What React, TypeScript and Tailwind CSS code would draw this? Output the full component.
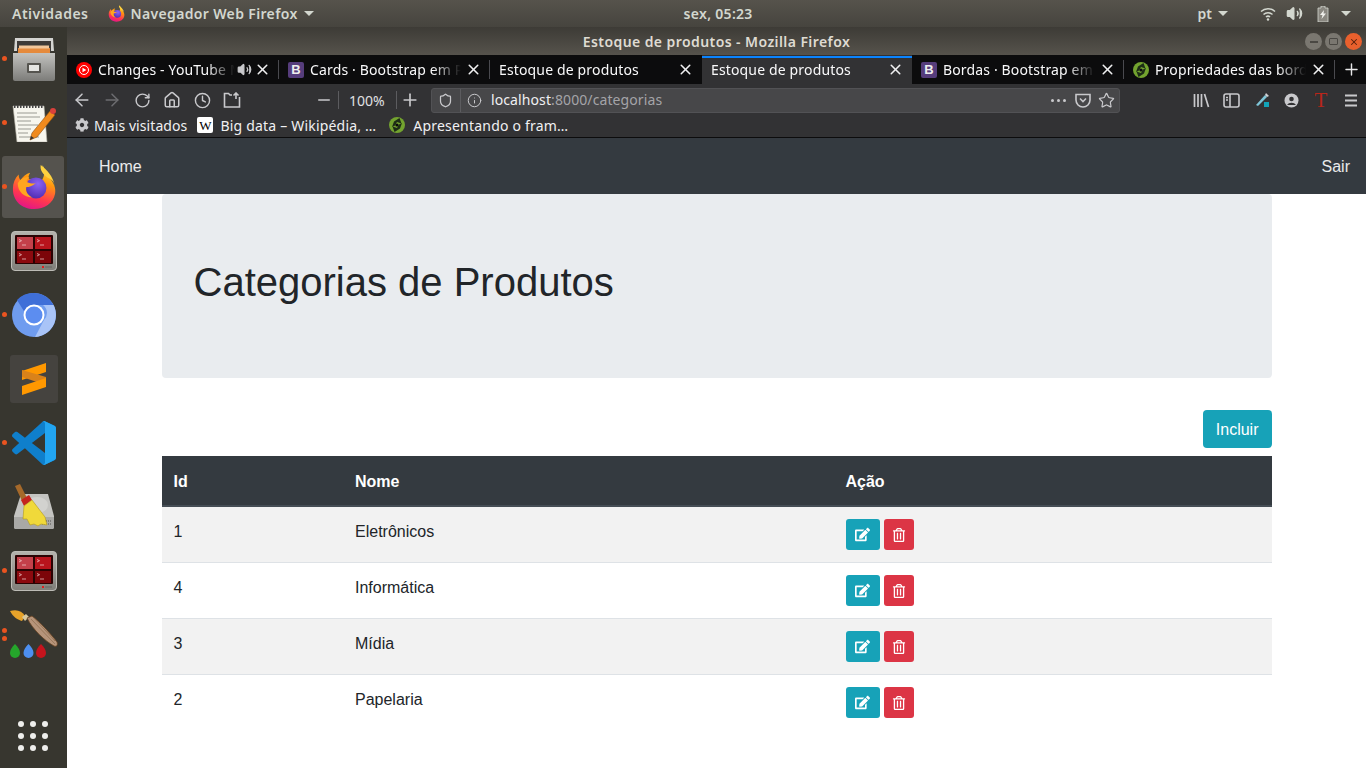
import { ArrowLeft, ArrowRight, Clock, House, Info, Minus, Plus, RotateCw, Shield, Star, Volume2, X } from "lucide-react"
import { FaCog, FaEdit, FaRegTrashAlt } from "react-icons/fa"

const ui = "font-['Noto_Sans','Open_Sans',sans-serif]"

function FirefoxLogo({ size, id }: { size: number; id: string }) {
  return (
    <svg width={size} height={size} viewBox="0 0 48 48">
      <defs>
        <linearGradient id={`${id}a`} x1="0.7" y1="0" x2="0.35" y2="1">
          <stop offset="0" stopColor="#ffe847" />
          <stop offset="0.35" stopColor="#ff980e" />
          <stop offset="0.72" stopColor="#ff3750" />
          <stop offset="1" stopColor="#e31587" />
        </linearGradient>
        <radialGradient id={`${id}b`} cx="0.6" cy="0.3" r="0.75">
          <stop offset="0" stopColor="#8a63f5" />
          <stop offset="1" stopColor="#4f2bb0" />
        </radialGradient>
      </defs>
      <path d="M33 1c0 6 4 9 7 13 5 6 7 11 6 17-2 10-11 16-22 16C11 47 2 38 2 26c0-6 2-11 6-15 0 3 1 5 2 6 2-4 6-7 10-8-2 3-2 5-1 7 4-1 9 0 12 3C35 14 36 7 33 1z" fill={`url(#${id}a)`} />
      <path d="M31 1c6 5 13 11 15 23 0-4-3-8-8-10-4-3-8-7-7-13z" fill="#ffd23f" />
      <circle cx="26" cy="25" r="11" fill={`url(#${id}b)`} />
      <path d="M7 20c3-5 7-7 12-6-3 2-3 4-2 5 3 1 6 2 9 1-4 3-7 4-10 4-1 4 1 9 7 11-9 0-16-6-16-15z" fill="#ffa51f" />
    </svg>
  )
}

function TerminalIcon({ id }: { id: string }) {
  return (
    <svg width="46" height="40" viewBox="0 0 46 40">
      <defs>
        <linearGradient id={id} x1="0" y1="0" x2="0" y2="1">
          <stop offset="0" stopColor="#b4b3ad" />
          <stop offset="1" stopColor="#7f7e78" />
        </linearGradient>
      </defs>
      <rect x="0.5" y="0.5" width="45" height="39" rx="3.500" fill={`url(#${id})`} stroke="#bdbcb6" />
      <rect x="4" y="4" width="38" height="29" rx="1" fill="#2a0303" />
      <rect x="6" y="6" width="16" height="12" fill="#c4404a" />
      <rect x="24" y="6" width="16" height="12" fill="#b8141c" />
      <rect x="6" y="20" width="16" height="12" fill="#8c0a0f" />
      <rect x="24" y="20" width="16" height="12" fill="#7c0509" />
      <path d="M8 8.500l2.500 1.200L8 11M11 14h4M26 8.500l2.500 1.200L26 11M29 14h4M8 22.500l2.500 1.200L8 25M11 28h4M26 22.500l2.500 1.200L26 25M29 28h4" stroke="#f4d5d5" strokeWidth="0.700" fill="none" />
      <rect x="31" y="35" width="2" height="2" fill="#e01b1b" />
      <rect x="34" y="35" width="7" height="2" fill="#74736e" />
    </svg>
  )
}

const dock = [
  <svg key="files" width="42" height="44" viewBox="0 0 42 44">
    <defs>
      <linearGradient id="cab" x1="0" y1="0" x2="0" y2="1">
        <stop offset="0" stopColor="#c2c2bf" />
        <stop offset="1" stopColor="#7c7c79" />
      </linearGradient>
    </defs>
    <path d="M2 1h38l1 13H1z" fill="#d4d4d1" />
    <rect x="4" y="4" width="34" height="11" fill="#3d3a37" />
    <rect x="5" y="11" width="32" height="6" fill="#e58a3c" />
    <rect x="6" y="8.500" width="30" height="3" fill="#f2c79b" />
    <path d="M0 16h42v26a2 2 0 0 1-2 2H2a2 2 0 0 1-2-2z" fill="url(#cab)" />
    <rect x="14" y="26" width="14" height="10" rx="1" fill="#55544f" />
    <rect x="16" y="28" width="10" height="6" fill="#e5e5e2" />
  </svg>,
  <svg key="notes" width="44" height="38" viewBox="0 0 44 38">
    <path d="M1 2h31l3 36H5z" fill="#f7f6ee" stroke="#b5b3a8" strokeWidth="0.600" />
    <path d="M2 2.500h30" stroke="#444" strokeWidth="3" strokeDasharray="1.500 1.500" />
    <path d="M5 9h20M5 13h23M5 17h14M6 21h20M6 25h13M6 29h10M7 33h20" stroke="#9a9a92" strokeWidth="1" />
    <path d="M20 29l-2 7 7-3 18-22-5-4z" fill="#f08a1d" stroke="#8d4f0e" strokeWidth="0.600" />
    <path d="M18 36l1-4 3 2z" fill="#333" />
    <circle cx="41" cy="7" r="3" fill="#d9413c" />
  </svg>,
  <FirefoxLogo key="firefox" size={46} id="ffdock" />,
  <TerminalIcon key="term" id="term1" />,
  <svg key="chromium" width="46" height="46" viewBox="0 0 46 46">
    <circle cx="23" cy="23" r="22" fill="#6f9cef" />
    <path d="M23 1a22 22 0 0 1 19.500 12H23a10 10 0 0 0-9.500 7L6 8a22 22 0 0 1 17-7z" fill="#3f6fd8" />
    <path d="M42.500 13A22 22 0 0 1 24 45l9-17a10 10 0 0 0-1-15z" fill="#a9c4f7" />
    <circle cx="23" cy="23" r="10.500" fill="#fff" />
    <circle cx="23" cy="23" r="8.500" fill="#5c8df0" />
  </svg>,
  <div key="sublime" className="flex h-[48px] w-[48px] items-center justify-center rounded-[3px] bg-[#45433f]">
    <svg width="24" height="32" viewBox="0 0 24 32">
      <path d="M24 0v9L0 17v-9z" fill="#ff9800" />
      <path d="M0 14l24 8v-8L0 7z" fill="#d9821a" />
      <path d="M24 15v9L0 32v-9z" fill="#ff9800" />
    </svg>
  </div>,
  <svg key="vscode" width="44" height="44" viewBox="0 0 100 100">
    <path fillRule="evenodd" d="M70.900 99.300c1.600.6 3.400.6 5-.2l20.600-9.900c2.200-1 3.500-3.200 3.500-5.600V16.400c0-2.400-1.400-4.600-3.500-5.600L75.900.9c-2-1-4.500-.8-6.300.5-.3.2-.5.4-.8.6L29.400 38 12.200 25c-1.600-1.200-3.800-1.100-5.300.2l-5.500 5c-1.800 1.600-1.800 4.500 0 6.200L16.300 50 1.400 63.600c-1.800 1.700-1.800 4.500 0 6.200l5.500 5c1.500 1.400 3.700 1.500 5.300.3l17.200-13 39.400 36c.6.600 1.300 1.100 2.100 1.400zM75 27.300L45.100 50 75 72.700z" fill="#0f7fcc" />
    <path d="M69 2c2-1.600 5-1.900 6.900-1.100l20.600 9.900c2.100 1 3.500 3.200 3.500 5.600v66.800c0 2.400-1.300 4.600-3.500 5.600l-20.600 9.900c-2 1-4.800.7-6.500-.8 2.800.9 5.600-.7 5.600-3.800V5.800C75 2.700 71.800 1 69 2z" fill="#22a5f1" />
  </svg>,
  <svg key="cleaner" width="42" height="46" viewBox="0 0 42 46">
    <path d="M8 10h27l6 22v11a2 2 0 0 1-2 2H3a2 2 0 0 1-2-2V32z" fill="#c4c4c1" />
    <path d="M1 33h40v10a2 2 0 0 1-2 2H3a2 2 0 0 1-2-2z" fill="#a9a9a6" />
    <path d="M29 37h9M29 40h9" stroke="#70706d" strokeWidth="1.500" strokeDasharray="1 1" />
    <ellipse cx="24" cy="21" rx="11" ry="8" fill="#d2d2cf" />
    <path d="M2 2l5-2 7 14-5 3z" fill="#a5692a" />
    <path d="M8 16l8-5 3 5-8 6z" fill="#c4231e" />
    <path d="M11 22l8-6 13 17 2 8-6-1-3 2-4-2-4 1-3-6-4 0z" fill="#f0d93a" stroke="#b39b1a" strokeWidth="0.600" />
  </svg>,
  <TerminalIcon key="term2" id="term2" />,
  <svg key="brush" width="48" height="52" viewBox="0 0 48 52">
    <path d="M0 2c7-2 12 0 15 5l-3 5C8 11 3 8 0 2z" fill="#e7a32a" />
    <path d="M12 8l4-3 3 3-4 4z" fill="#d8c9a0" />
    <path d="M17 9l5-2c8 6 18 17 25 26 1 3 0 5-3 4C35 32 23 21 17 9z" fill="#b6947a" stroke="#6a4422" strokeWidth="0.800" />
    <path d="M21 10l24 25M24 9l21 23" stroke="#8d6b4c" strokeWidth="0.700" />
    <path d="M5 35c3 3 5 6 5 9a5 5 0 0 1-10 0c0-3 2-6 5-9z" fill="#25a52b" />
    <path d="M18.500 35c3 3 5 6 5 9a5 5 0 0 1-10 0c0-3 2-6 5-9z" fill="#4d8ff0" />
    <path d="M31 35c3 3 5 6 5 9a5 5 0 0 1-10 0c0-3 2-6 5-9z" fill="#c5141d" />
  </svg>,
]

const tabs = [
  { title: "Changes - YouTube Music", icon: "yt", audio: true, width: "w-[212px]" },
  { title: "Cards · Bootstrap em Português", icon: "bs", width: "w-[211px]" },
  { title: "Estoque de produtos", width: "w-[212px]" },
  { title: "Estoque de produtos", active: true, width: "w-[210px]" },
  { title: "Bordas · Bootstrap em Português", icon: "bs", width: "w-[212px]" },
  { title: "Propriedades das bordas", icon: "w3", width: "w-[211px]" },
]

const rows = [
  { id: 1, name: "Eletrônicos" },
  { id: 4, name: "Informática" },
  { id: 3, name: "Mídia" },
  { id: 2, name: "Papelaria" },
]

function W3Icon({ size }: { size: number }) {
  return (
    <svg width={size} height={size} viewBox="0 0 16 16" className="shrink-0">
      <circle cx="8" cy="8" r="8" fill="#73a32f" />
      <path d="M10.500 1L5 4.500 3 10l3-1.500L8 5l4.500 1.500z" fill="#1d2d16" />
      <path d="M5.500 15L11 11.500 13 6l-3 1.500L8 11 3.500 9.500z" fill="#1d2d16" />
      <circle cx="8" cy="8" r="1.600" fill="#0c0c0d" />
    </svg>
  )
}

function BsIcon() {
  return <span className="flex h-4 w-4 shrink-0 items-center justify-center rounded-[2px] bg-[#563d7c] font-['Liberation_Sans',sans-serif] text-[13px] font-bold leading-none text-[#eee]">B</span>
}

function YtIcon() {
  return (
    <svg width="16" height="16" viewBox="0 0 16 16" className="shrink-0">
      <circle cx="8" cy="8" r="8" fill="#f00" />
      <circle cx="8" cy="8" r="4.500" fill="none" stroke="#fff" strokeWidth="1" />
      <path d="M6.500 5.800v4.400L10.300 8z" fill="#fff" />
    </svg>
  )
}

function Tab({ title, icon, audio, active, width }: { title: string; icon?: string; audio?: boolean; active?: boolean; width: string }) {
  return (
    <div className={`relative flex h-full shrink-0 items-center pl-[9px] pr-[8px] ${width} ${active ? "bg-[#323234]" : ""}`}>
      {active && <div className="absolute inset-x-0 top-[1px] h-[2px] bg-[#0a84ff]" />}
      {!active && title !== "Estoque de produtos" && <div className="absolute right-0 top-[5px] h-[19px] w-px bg-[#4a4a4f]" />}
      <div className="flex min-w-0 flex-1 items-center gap-[6px]">
        {icon === "yt" && <YtIcon />}
        {icon === "bs" && <BsIcon />}
        {icon === "w3" && <W3Icon size={16} />}
        <span className="min-w-0 flex-1 overflow-hidden whitespace-nowrap text-[14px] leading-[20px] tracking-[0.15px] text-[#f9f9fa] [mask-image:linear-gradient(to_left,transparent_0,black_28px)]">{title}</span>
      </div>
      {audio && <Volume2 size={15} className="ml-[2px] shrink-0 text-[#c9c9cc]" fill="#c9c9cc" />}
      <X size={17} strokeWidth={2.2} className={`shrink-0 text-[#f0f0f1] ${audio ? "ml-[2px]" : "ml-[4px]"}`} />
    </div>
  )
}

function TitleButton({ bg, children }: { bg: string; children: React.ReactNode }) {
  return <span className={`flex h-[17px] w-[17px] items-center justify-center rounded-full ${bg}`}>{children}</span>
}

export default function App() {
  return (
    <div className={`flex h-screen w-[1366px] flex-col overflow-hidden bg-white ${ui}`}>
      <header className="flex h-[27px] shrink-0 items-center bg-gradient-to-b from-[#56534c] to-[#46443e] pl-[12px] pr-[15px] text-[14px] font-semibold text-[#d3d7cf]">
        <span className="tracking-[0.5px]">Atividades</span>
        <span className="ml-[20px] flex items-center gap-[5px] tracking-[0.35px]">
          <FirefoxLogo size={17} id="fftop" />
          <span>Navegador Web Firefox</span>
          <span className="ml-[1px] h-0 w-0 border-x-[5px] border-t-[5px] border-x-transparent border-t-[#d3d7cf]" />
        </span>
        <span className="ml-[370px] tracking-[0.3px]">sex, 05:23</span>
        <span className="ml-auto flex items-center">
          <span>pt</span>
          <span className="ml-[6px] h-0 w-0 border-x-[5px] border-t-[5px] border-x-transparent border-t-[#d3d7cf]" />
          <svg width="16" height="14" viewBox="0 0 16 14" className="ml-[32px]" fill="none" stroke="#d3d7cf" strokeWidth="1.500">
            <path d="M1 4.500a10 10 0 0 1 14 0M3.500 7.500a6.500 6.500 0 0 1 9 0M6 10a3 3 0 0 1 4 0" />
            <circle cx="8" cy="12.500" r="1.200" fill="#d3d7cf" stroke="none" />
          </svg>
          <Volume2 size={17} className="ml-[10px] text-[#d3d7cf]" fill="#d3d7cf" />
          <svg width="12" height="16" viewBox="0 0 12 16" className="ml-[14px]">
            <path d="M4 0h4v2h3v14H1V2h3z" fill="#8a8881" stroke="#d3d7cf" strokeWidth="0.800" />
            <path d="M7 4L3 9h2.500L4.500 13 9 7.500H6.500z" fill="#f0f0ec" />
          </svg>
          <span className="ml-[12px] h-0 w-0 border-x-[5px] border-t-[5px] border-x-transparent border-t-[#d3d7cf]" />
        </span>
      </header>

      <div className="flex min-h-0 flex-1">
        <aside className="flex w-[67px] shrink-0 flex-col bg-[#37362f]">
          {dock.map((icon, i) => (
            <div key={i} className="relative flex h-[64px] shrink-0 items-center justify-center">
              {i === 2 && <div className="absolute bottom-[1px] left-[2px] right-[3px] top-[1px] rounded-[3px] bg-[#55534e]" />}
              <div className="relative flex items-center justify-center">{icon}</div>
              {[0, 1, 2, 4, 6, 8].includes(i) && <span className="absolute left-[2px] top-[29px] h-[5px] w-[5px] rounded-full bg-[#e95420]" />}
              {i === 9 && (
                <>
                  <span className="absolute left-[2px] top-[25px] h-[5px] w-[5px] rounded-full bg-[#e95420]" />
                  <span className="absolute left-[2px] top-[33px] h-[5px] w-[5px] rounded-full bg-[#e95420]" />
                </>
              )}
            </div>
          ))}
          <div className="mb-[17px] ml-[18px] mt-auto grid w-[30px] grid-cols-3 gap-[6px]">
            {Array.from({ length: 9 }).map((_, i) => (
              <span key={i} className="h-[6px] w-[6px] rounded-full bg-[#eeeeec]" />
            ))}
          </div>
        </aside>

        <div className="flex min-w-0 flex-1 flex-col">
          <div className="flex h-[28px] shrink-0 items-center justify-center bg-gradient-to-b from-[#3d3b36] to-[#56534c]">
            <span className="text-[14px] font-semibold tracking-[0.42px] text-[#dfdbd2]">Estoque de produtos - Mozilla Firefox</span>
          </div>
          <div className="-mt-[22px] mb-[5px] flex h-[17px] shrink-0 justify-end gap-[3px] pr-[4px]">
            <TitleButton bg="bg-[#7a7770]"><span className="h-[2px] w-[8px] bg-[#4a4843]" /></TitleButton>
            <TitleButton bg="bg-[#7a7770]"><span className="h-[7px] w-[9px] rounded-[1px] border border-[#4a4843]" /></TitleButton>
            <TitleButton bg="bg-[#e9602d]"><X size={10} strokeWidth={2.5} className="text-[#57200c]" /></TitleButton>
          </div>

          <div className="flex h-[29px] shrink-0 items-center bg-[#0c0c0d]">
            {tabs.map((t, i) => (
              <Tab key={i} {...t} />
            ))}
            <Plus size={19} strokeWidth={1.8} className="ml-[7px] text-[#e6e6e8]" />
          </div>

          <div className="flex h-[29px] shrink-0 items-center bg-[#323234] pl-[5px] pr-[7px] pt-[3px] text-[#c9c9cc]">
            <ArrowLeft size={20} strokeWidth={1.8} />
            <ArrowRight size={20} strokeWidth={1.8} className="ml-[10px] text-[#6d6d70]" />
            <RotateCw size={17} strokeWidth={2} className="ml-[12px]" />
            <House size={18} strokeWidth={2} className="ml-[12px]" />
            <Clock size={17} strokeWidth={2} className="ml-[13px]" />
            <svg width="18" height="16" viewBox="0 0 18 16" className="ml-[12px]" fill="none" stroke="currentColor" strokeWidth="1.600">
              <path d="M9 3H7L5.500 1.500H1.500V15h15V5M13 1v6M10.500 3.500L13 1l2.500 2.500" />
            </svg>
            <Minus size={18} strokeWidth={2} className="ml-[74px]" />
            <span className="ml-[5px] h-[18px] w-px bg-[#5c5c5f]" />
            <span className="ml-[10px] w-[38px] text-[14px] text-[#e0e0e2]">100%</span>
            <span className="ml-[9px] h-[18px] w-px bg-[#5c5c5f]" />
            <Plus size={20} strokeWidth={2} className="ml-[3px]" />
            <div className="ml-[11px] flex h-[25px] w-[689px] items-center rounded-[3px] border border-[#525255] bg-[#474749] pl-[6px] pr-[4px]">
              <Shield size={15} strokeWidth={2} />
              <span className="ml-[7px] h-[23px] w-px bg-[#5c5c5f]" />
              <Info size={15} strokeWidth={1.6} className="ml-[6px]" />
              <span className="ml-[9px] text-[14px] leading-[20px] tracking-[0.1px] text-[#f0f0f2]">localhost<span className="text-[#a4a4a8]">:8000/categorias</span></span>
              <span className="ml-auto flex gap-[3px]">
                <span className="h-[3px] w-[3px] rounded-full bg-[#c9c9cc]" />
                <span className="h-[3px] w-[3px] rounded-full bg-[#c9c9cc]" />
                <span className="h-[3px] w-[3px] rounded-full bg-[#c9c9cc]" />
              </span>
              <svg width="16" height="15" viewBox="0 0 16 15" className="ml-[9px]" fill="none" stroke="currentColor" strokeWidth="1.600">
                <path d="M1 1.500h14v5.500a7 7 0 0 1-14 0z" />
                <path d="M5 5.500l3 3 3-3" />
              </svg>
              <Star size={17} strokeWidth={1.7} className="ml-[7px]" />
            </div>
            <svg width="17" height="15" viewBox="0 0 17 15" className="ml-[73px]" fill="none" stroke="currentColor" strokeWidth="1.700">
              <path d="M1.500 1v13M5 1v13M8.500 1v13M11.500 1l4 13" />
            </svg>
            <svg width="17" height="15" viewBox="0 0 17 15" className="ml-[13px]" fill="none" stroke="currentColor" strokeWidth="1.600">
              <rect x="1" y="1" width="15" height="13" rx="2" />
              <path d="M7 1v13M3 4.500h2M3 7h2" />
            </svg>
            <svg width="17" height="16" viewBox="0 0 17 16" className="ml-[13px]">
              <path d="M3 13L12 3l2 2-9 9z" fill="#7fc6d8" />
              <path d="M13 1l3 3-2 1-2-2z" fill="#d0d0d3" />
              <rect x="11" y="10" width="5" height="5" fill="#12a4b8" />
            </svg>
            <svg width="15" height="15" viewBox="0 0 15 15" className="ml-[14px]">
              <circle cx="7.500" cy="7.500" r="7" fill="#c9c9cc" />
              <circle cx="7.500" cy="6" r="2.300" fill="#323234" />
              <path d="M3 12a5 4 0 0 1 9 0z" fill="#323234" />
            </svg>
            <span className="ml-[15px] w-[14px] text-center font-['Liberation_Serif',serif] text-[21px] leading-none text-[#b8261a]">T</span>
            <svg width="14" height="13" viewBox="0 0 14 13" className="ml-[16px]" fill="none" stroke="currentColor" strokeWidth="1.800">
              <path d="M1 1.500h12M1 6.500h12M1 11.500h12" />
            </svg>
          </div>

          <div className="flex h-[24px] shrink-0 items-center bg-[#323234] pl-[8px] text-[14px] text-[#f0f0f2]">
            <FaCog size={14} className="text-[#c9c9cc]" />
            <span className="ml-[5px] tracking-[0.08px]">Mais visitados</span>
            <span className="ml-[10px] flex h-[16px] w-[16px] items-center justify-center rounded-[2px] bg-white font-['Liberation_Serif',serif] text-[13px] leading-none text-black">W</span>
            <span className="ml-[7px] tracking-[0.2px]">Big data – Wikipédia, …</span>
            <span className="ml-[13px] flex"><W3Icon size={16} /></span>
            <span className="ml-[8px] tracking-[0.2px]">Apresentando o fram…</span>
          </div>
          <div className="h-px shrink-0 bg-[#0c0c0d]" />

          <main className="min-h-0 flex-1 bg-white font-['Liberation_Sans',sans-serif] text-[16px] leading-[24px] text-[#212529]">
            <nav className="flex h-[56px] items-center justify-between bg-[#343a40] pl-[32px] pr-[16px] pt-[2px] text-white/90">
              <span>Home</span>
              <span>Sair</span>
            </nav>
            <div className="mx-auto w-[1110px]">
              <div className="h-[184px] rounded-[4px] bg-[#e9ecef] px-[32px] pt-[64px]">
                <h1 className="text-[40px] font-normal leading-[48px]">Categorias de Produtos</h1>
              </div>
              <div className="mt-[32px] flex justify-end">
                <button className="h-[38px] rounded-[4px] bg-[#17a2b8] px-[13px] pt-[1px] text-white">Incluir</button>
              </div>
              <table className="mt-[8px] w-full table-fixed border-collapse">
                <colgroup>
                  <col className="w-[181.500px]" />
                  <col className="w-[490.500px]" />
                  <col />
                </colgroup>
                <thead>
                  <tr className="h-[50px] border-b-2 border-[#454d55] bg-[#343a40] text-left font-bold text-white">
                    <th className="px-[12px] pt-[2px]">Id</th>
                    <th className="px-[12px] pt-[2px]">Nome</th>
                    <th className="px-[12px] pt-[2px]">Ação</th>
                  </tr>
                </thead>
                <tbody>
                  {rows.map((row, i) => (
                    <tr key={row.id} className={`border-t border-[#dee2e6] first:border-t-0 ${i % 2 === 0 ? "bg-[#f2f2f2]" : "bg-white"}`}>
                      <td className="px-[12px] pb-[11px] pt-[13px] align-top">{row.id}</td>
                      <td className="px-[12px] pb-[11px] pt-[13px] align-top">{row.name}</td>
                      <td className="p-[12px] align-top">
                        <div className="flex h-[31px] gap-[4px]">
                          <button className="flex w-[34px] items-center justify-center rounded-[3px] bg-[#17a2b8] text-white"><FaEdit size={15} /></button>
                          <button className="flex w-[30px] items-center justify-center rounded-[3px] bg-[#dc3545] text-white"><FaRegTrashAlt size={14} /></button>
                        </div>
                      </td>
                    </tr>
                  ))}
                </tbody>
              </table>
            </div>
          </main>
        </div>
      </div>
    </div>
  )
}
